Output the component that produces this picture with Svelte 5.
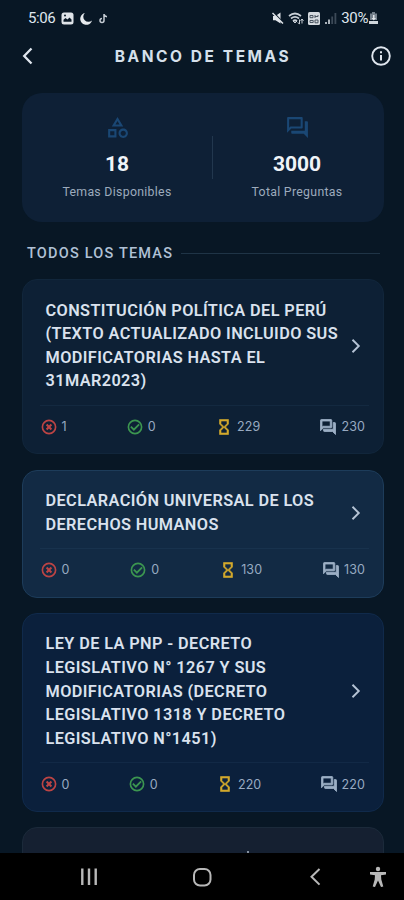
<script>
    const topics = [
        {
            lines: ['CONSTITUCIÓN POLÍTICA DEL PERÚ', '(TEXTO ACTUALIZADO INCLUIDO SUS', 'MODIFICATORIAS HASTA EL', '31MAR2023)'],
            tone: 'navy', wrong: 1, right: 0, pending: 229, total: 230
        },
        {
            lines: ['DECLARACIÓN UNIVERSAL DE LOS', 'DERECHOS HUMANOS'],
            tone: 'steel', wrong: 0, right: 0, pending: 130, total: 130
        },
        {
            lines: ['LEY DE LA PNP - DECRETO', 'LEGISLATIVO N° 1267 Y SUS', 'MODIFICATORIAS (DECRETO', 'LEGISLATIVO 1318 Y DECRETO', 'LEGISLATIVO N°1451)'],
            tone: 'blue', wrong: 0, right: 0, pending: 220, total: 220
        }
    ];

    const chat = 'M15 4v7H5.17L4 12.17V4h11m1-2H3c-.55 0-1 .45-1 1v14l4-4h10c.55 0 1-.45 1-1V3c0-.55-.45-1-1-1zm5 4h-2v9H6v2c0 .55.45 1 1 1h11l4 4V7c0-.55-.45-1-1-1z';
    const hourglass = 'M6 2v6h.01L6 8.01 10 12l-4 4 .01.01H6V22h12v-5.99h-.01L18 16l-4-4 4-3.99-.01-.01H18V2H6zm10 14.5V20H8v-3.5l4-4 4 4zm-4-5l-4-4V4h8v3.5l-4 4z';
    const category = 'M12 2l-5.5 9h11L12 2zm0 3.84L13.93 9h-3.87L12 5.84zM17.5 13c-2.49 0-4.5 2.01-4.5 4.5s2.01 4.5 4.5 4.5 4.5-2.01 4.5-4.5-2.01-4.5-4.5-4.5zm0 7c-1.38 0-2.5-1.12-2.5-2.5s1.12-2.5 2.5-2.5 2.5 1.12 2.5 2.5-1.12 2.5-2.5 2.5zM3 21.5h8v-8H3v8zm2-6h4v4H5v-4z';
</script>

<div class="phone">
    <div class="status">
        <span class="clock">5:06</span>
        <svg width="13" height="13" viewBox="0 0 13 13">
            <rect x=".5" y=".5" width="12" height="12" rx="2.5" fill="#dfe4e9" />
            <path d="M2.5 9.8V7.8l2-1.8 2 1.6 2-2.2 2 2v2.4z" fill="#0a1826" />
            <circle cx="4" cy="3.6" r="1" fill="#0a1826" />
        </svg>
        <svg class="moon" width="13" height="13" viewBox="0 0 13 13">
            <path d="M4.8 1A6 6 0 1 0 12 8.5 5.2 5.2 0 0 1 4.8 1z" fill="#e6eaee" />
        </svg>
        <svg class="note" width="9" height="11" viewBox="0 0 9 11">
            <path d="M5 1v6.5a2 2 0 1 1-2-2M5 1.2c.3 1.6 1.3 2.4 3 2.5" fill="none" stroke="#c4cbd3" stroke-width="1.5" />
        </svg>
        <div class="signals">
            <svg width="12" height="12" viewBox="0 0 12 12">
                <path d="M1 4h2.5L8.5.5v11L3.5 8.3H1z" fill="#dfe4e9" />
                <path d="M1 0l10.5 11" stroke="#0a1826" stroke-width="1.4" />
                <path d="M.5 1l10.5 10.5" stroke="#dfe4e9" stroke-width="1.5" />
            </svg>
            <svg width="16" height="13" viewBox="0 0 16 13">
                <path d="M1 4q6-5 12 0M3 6.5q4-3.3 8 0M5 9q2-1.6 4 0" fill="none" stroke="#c9d0d7" stroke-width="1.7" />
                <path d="M7 11l-2-2h4zM11.5 12V7.5m-1.6 3 1.6 1.7M14 7v4.5M12.6 8.8 14 7l1.5 1.8" fill="none" stroke="#c9d0d7" />
            </svg>
            <svg width="12" height="13" viewBox="0 0 12 13">
                <rect width="12" height="13" rx="1.5" fill="#d5dadf" />
                <path d="M2 3.5h3v2.2H2zM7 3v3m0-1.5h3V3M2 8.5h3.2v2H2zM7 8h3v2.8H7z" fill="none" stroke="#3c4855" stroke-width=".9" />
            </svg>
            <svg width="13" height="13" viewBox="0 0 13 13">
                <path d="M1 10h2v2H1zM4 7.5h2V12H4z" fill="#aab2ba" />
                <path d="M7.3 4.5h1.8V12H7.3zM10.5 1h1.8v11h-1.8z" fill="#3c4a58" />
            </svg>
            <span class="battery">30%</span>
            <svg width="9" height="13" viewBox="0 0 9 13">
                <path d="M3 0h3v1.5h2V8H1V1.5h2z" fill="#75818d" />
                <path d="M4 3h1.5v3H7L4.8 8.5 2.5 6H4z" fill="#dfe4e9" />
                <path d="M0 9h9v3H0z" fill="#cfd6dc" />
            </svg>
        </div>
    </div>

    <header>
        <svg width="14" height="20" viewBox="0 0 14 20">
            <path d="M10.5 2.5L3.2 10l7.3 7.5" fill="none" stroke="#dfe6ee" stroke-width="2.3" />
        </svg>
        <h1>BANCO DE TEMAS</h1>
        <svg width="20" height="20" viewBox="0 0 20 20">
            <circle cx="10" cy="10" r="8.8" fill="none" stroke="#dfe6ee" stroke-width="1.9" />
            <path d="M9 9h2v5.6H9zM9 5.2h2v2H9z" fill="#dfe6ee" />
        </svg>
    </header>

    <section class="summary">
        <div class="stat topics">
            <svg width="25" height="25" viewBox="0 0 24 24"><path d={category} /></svg>
            <strong>18</strong>
            <span>Temas Disponibles</span>
        </div>
        <div class="split"></div>
        <div class="stat questions">
            <svg width="25" height="25" viewBox="0 0 24 24"><path d={chat} /></svg>
            <strong>3000</strong>
            <span>Total Preguntas</span>
        </div>
    </section>

    <div class="heading">
        <h2>TODOS LOS TEMAS</h2>
        <div class="rule"></div>
    </div>

    <main>
        {#each topics as topic}
            <article class="card {topic.tone}">
                <div class="top">
                    <h3>
                        {#each topic.lines as line}
                            <span>{line}</span>
                        {/each}
                    </h3>
                    <svg width="10" height="16" viewBox="0 0 10 16">
                        <path d="M1.5 1.8L7.8 8l-6.3 6.2" fill="none" stroke="#b5c3d5" stroke-width="1.9" />
                    </svg>
                </div>
                <div class="counts">
                    <div class="count">
                        <svg width="18" height="18" viewBox="0 0 24 24" fill="none" stroke="#bd4444" stroke-width="2.2">
                            <circle cx="12" cy="12" r="8.8" />
                            <path d="M8.8 8.8l6.4 6.4M15.2 8.8l-6.4 6.4" stroke-width="2.8" />
                        </svg>
                        {topic.wrong}
                    </div>
                    <div class="count">
                        <svg width="18" height="18" viewBox="0 0 24 24" fill="none" stroke="#3c9650" stroke-width="2.2">
                            <circle cx="12" cy="12" r="8.8" />
                            <path d="M6.5 11.5l4 4 7-7" stroke-width="2.4" />
                        </svg>
                        {topic.right}
                    </div>
                    <div class="count">
                        <svg width="18" height="18" viewBox="0 0 24 24"><path d={hourglass} fill="#d3a92c" stroke="#d3a92c" stroke-width=".8" /></svg>
                        {topic.pending}
                    </div>
                    <div class="count">
                        <svg width="18" height="18" viewBox="0 0 24 24"><path d={chat} fill="#9cafc5" stroke="#9cafc5" stroke-width="1.1" /></svg>
                        {topic.total}
                    </div>
                </div>
            </article>
        {/each}
        <article class="card slate"><i class="peek"></i></article>
    </main>

    <nav>
        <svg width="404" height="47" viewBox="0 0 404 47" fill="none" stroke="#b8b8b8" stroke-width="2">
            <path d="M82.3 15.5v16.5M89 15.5v16.5M95.7 15.5v16.5" stroke-width="2.4" />
            <rect x="194" y="16" width="16.5" height="16.5" rx="6" />
            <path d="M319.5 16l-8 7.8 8 7.8" />
            <circle cx="378" cy="16" r="2.2" fill="#b8b8b8" stroke="none" />
            <path d="M370 19h16v2.5l-5 .8.3 4.2 2 7-2.3.6-3-6.7-3 6.7-2.3-.6 2-7 .3-4.2-5-.8z" fill="#b8b8b8" stroke="none" />
        </svg>
    </nav>
</div>

<style>
    :global(body) {
        background: #081725;
    }

    .phone {
        display: flex;
        flex-direction: column;
        box-sizing: border-box;
        height: 900px;
        overflow: hidden;
        background: #081725;
        color: #dfe6ee;
        font-family: Roboto, sans-serif;
    }

    svg {
        display: block;
        flex: none;
    }

    h1, h2, h3 {
        margin: 0;
    }

    .status {
        display: flex;
        align-items: center;
        flex: none;
        height: 36px;
        padding: 0 26px 0 28px;
        font-size: 15px;
        letter-spacing: -0.4px;
    }

    .clock {
        width: 33px;
    }

    .moon, .note {
        margin-left: 6px;
    }

    .signals {
        display: flex;
        align-items: center;
        gap: 4px;
        margin-left: auto;
    }

    .battery {
        margin-right: -3px;
    }

    header {
        display: flex;
        align-items: center;
        justify-content: space-between;
        flex: none;
        height: 40px;
        padding: 0 13px 0 21px;
    }

    h1 {
        padding-top: 1px;
        font-family: Inter, sans-serif;
        font-size: 15.5px;
        font-weight: 700;
        letter-spacing: 2.55px;
        color: #d5e0eb;
    }

    .summary {
        display: flex;
        align-items: center;
        flex: none;
        box-sizing: border-box;
        height: 129px;
        margin: 17px 20px 0 22px;
        border-radius: 20px;
        background: #0e2036;
    }

    .stat {
        display: flex;
        flex-direction: column;
        align-items: center;
    }

    .topics {
        width: 190px;
    }

    .questions {
        width: 168px;
    }

    .stat path {
        fill: #1a4774;
    }

    .stat strong {
        margin-top: 10px;
        font-size: 21px;
        line-height: 29px;
        color: #f0f4f8;
    }

    .stat span {
        margin-top: 4px;
        font-size: 12.3px;
        line-height: 18px;
        letter-spacing: 0.3px;
        color: #9dabbd;
    }

    .split {
        width: 1px;
        height: 43px;
        background: #22374e;
    }

    .heading {
        display: flex;
        align-items: center;
        flex: none;
        height: 31px;
        margin: 16px 24px 0 27px;
        gap: 8px;
    }

    h2 {
        font-size: 14.5px;
        font-weight: 500;
        letter-spacing: 1.2px;
        color: #b0c1d5;
    }

    .rule {
        flex: 1;
        height: 1px;
        background: #1f3446;
    }

    main {
        display: flex;
        flex-direction: column;
        flex: 1;
        min-height: 0;
        gap: 15.3px;
        padding: 10px 20px 0 22px;
        overflow: hidden;
    }

    .card {
        flex: none;
        box-sizing: border-box;
        padding: 18.5px 14px 1px 18px;
        border: 1px solid;
        border-radius: 15px;
    }

    .navy {
        background: #0d2035;
        border-color: #11263b;
    }

    .steel {
        background: #122a44;
        border-color: #1d3c5a;
    }

    .blue {
        background: #0b203c;
        border-color: #102a4b;
    }

    .slate {
        position: relative;
        height: 140px;
        background: #152031;
        border-color: #1b2a3a;
    }

    .top {
        display: flex;
        align-items: center;
        justify-content: space-between;
        padding: 0 8px 12px 4.5px;
    }

    h3 {
        font-size: 16.3px;
        font-weight: 600;
        line-height: 23.6px;
        letter-spacing: 0.4px;
        color: #dae2ee;
    }

    h3 span {
        display: block;
        white-space: nowrap;
    }

    .counts {
        display: flex;
        align-items: center;
        justify-content: space-between;
        box-sizing: border-box;
        height: 47.4px;
        margin-left: -1.5px;
        padding: 0 4px 5px 0;
        border-top: 1px solid rgba(90, 130, 175, 0.09);
    }

    .count {
        display: flex;
        align-items: center;
        gap: 4px;
        font-family: Inter, sans-serif;
        font-size: 12.5px;
        letter-spacing: 0.1px;
        color: #98aac1;
    }

    /* tip of the accent from the title cut off by the navigation bar */
    .peek {
        position: absolute;
        top: 23px;
        left: 224px;
        width: 2px;
        height: 2px;
        background: #8793a1;
    }

    nav {
        flex: none;
        height: 47px;
        background: #000000;
    }
</style>
